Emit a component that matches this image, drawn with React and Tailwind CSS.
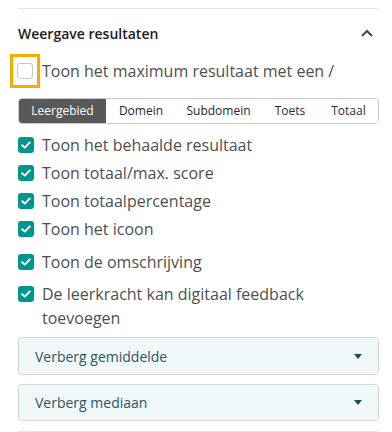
import React from "react";

function Check({ checked }) {
  if (!checked) {
    return (
      <span className="block w-4 h-4 rounded-[3px] border border-[#c8c8c8] bg-white shrink-0" />
    );
  }
  return (
    <span className="flex items-center justify-center w-4 h-4 rounded-[3px] bg-[#00958f] shrink-0">
      <svg width="10" height="8" viewBox="0 0 10 8" fill="none">
        <path d="M1.2 4.2 L3.8 6.6 L8.8 1.4" stroke="white" strokeWidth="1.9" strokeLinecap="round" strokeLinejoin="round" />
      </svg>
    </span>
  );
}

function Row({ children, className = "" }) {
  return (
    <div className={"flex items-center h-7 gap-2 " + className}>
      <Check checked />
      <span className="text-[16px] text-[#4f4f4f] leading-6">{children}</span>
    </div>
  );
}

function Select({ label, className = "" }) {
  return (
    <div className={"flex items-center justify-between rounded-[4px] border border-[#d3d7d8] bg-[#f0f8fa] pl-4 pr-[16px] " + className}>
      <span className="text-[14px] text-[#2c5661]">{label}</span>
      <svg width="8" height="5" viewBox="0 0 8 5"><path d="M0 0 L8 0 L4 5 Z" fill="#1d4f56" /></svg>
    </div>
  );
}

export default function App() {
  const segs = [
    { t: "Leergebied", w: "w-[87px]", active: true },
    { t: "Domein", w: "w-[70px]" },
    { t: "Subdomein", w: "w-[85px]" },
    { t: "Toets", w: "w-[58px]", c: "text-[#3c1f3c]" },
    { t: "Totaal", w: "flex-1", c: "text-[#3c1f3c]" },
  ];
  return (
    <div className="w-[392px] h-[432px] bg-white overflow-hidden" style={{ fontFamily: '"Open Sans", sans-serif' }}>
      <div className="mx-[18px] mt-[8px] border-t border-[#e6e6e6]" style={{ width: 361 }}>
        <div className="flex items-center justify-between h-[45px] pt-[3px]">
          <span className="text-[14px] font-semibold text-[#1c1c1c]">Weergave resultaten</span>
          <svg width="14" height="10" viewBox="0 0 14 10" className="mr-[5px]">
            <path d="M2 8 L7 3 L12 8" stroke="#4a4a4a" strokeWidth="2" fill="none" />
          </svg>
        </div>
        <div className="flex items-center h-[34px] -ml-[8px]">
          <div className="flex items-center justify-center w-[30px] h-[34px] border-[3px] border-[#f5ab00]">
            <Check />
          </div>
          <span className="ml-[2px] text-[16px] text-[#4f4f4f]">Toon het maximum resultaat met een /</span>
        </div>
        <div className="flex mt-[10px] h-[26px] rounded-[4px] border border-[#c9c9c9] overflow-hidden">
          {segs.map((s) => (
            <div
              key={s.t}
              className={
                "flex items-center justify-center text-[12px] " +
                s.w +
                " " +
                (s.active ? "bg-[#595959] text-white" : "bg-white " + (s.c || "text-[#262626]"))
              }
            >
              {s.t}
            </div>
          ))}
        </div>
        <Row className="mt-[7px]">Toon het behaalde resultaat</Row>
        <Row>Toon totaal/max. score</Row>
        <Row>Toon totaalpercentage</Row>
        <Row>Toon het icoon</Row>
        <Row className="mt-[5px]">Toon de omschrijving</Row>
        <div className="flex items-start gap-2 mt-[6px]">
          <span className="mt-[4px]"><Check checked /></span>
          <span className="text-[16px] text-[#4f4f4f] leading-6">
            De leerkracht kan digitaal feedback<br />toevoegen
          </span>
        </div>
        <Select label="Verberg gemiddelde" className="mt-[7px] h-[38px]" />
        <Select label="Verberg mediaan" className="mt-[9px] h-[37px]" />
        <div className="mt-[10px] border-t border-[#e6e6e6]" />
      </div>
    </div>
  );
}
